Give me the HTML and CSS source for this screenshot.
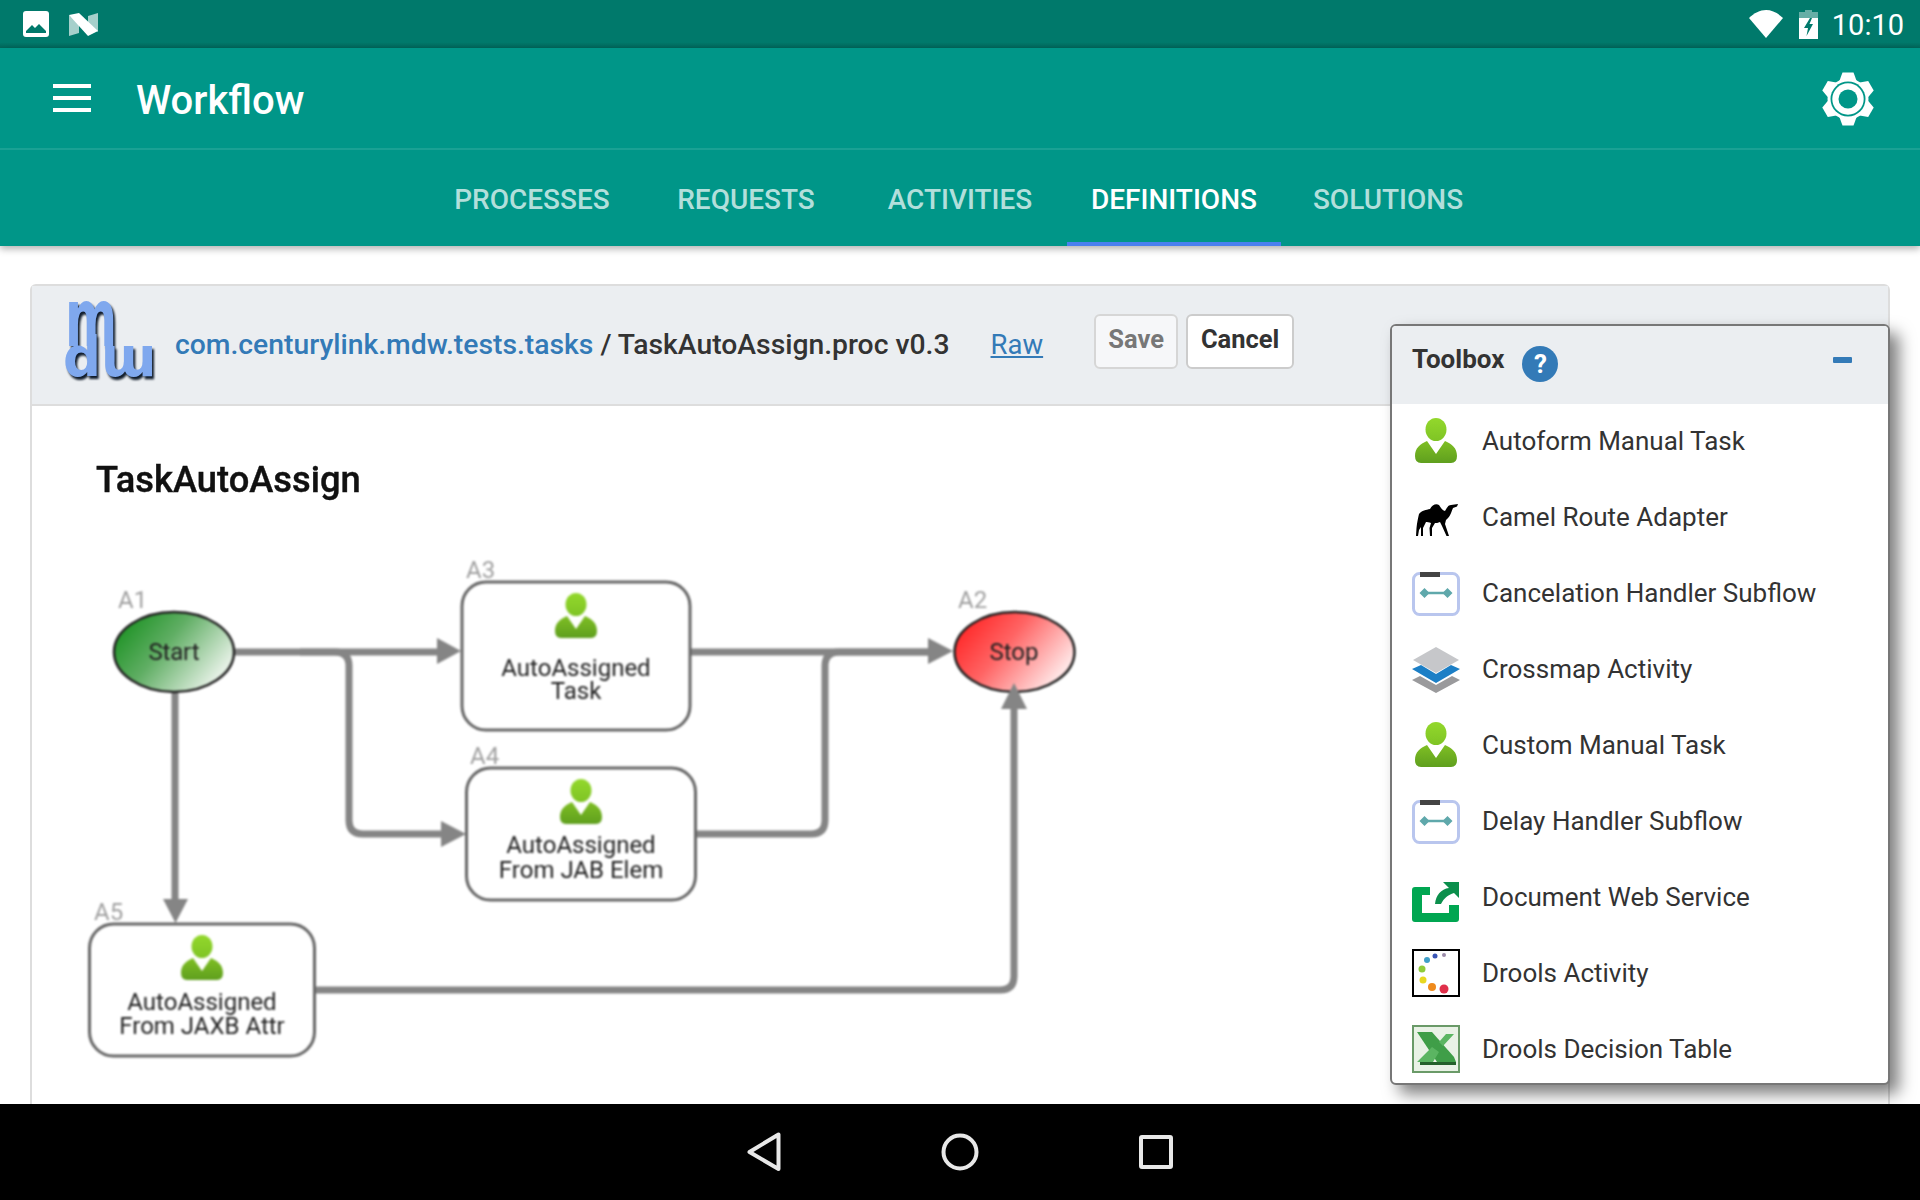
FILE: index.html
```html
<!DOCTYPE html>
<html lang="en">
<head>
<meta charset="UTF-8">
<meta name="viewport" content="width=device-width, initial-scale=1.0">
<title>Workflow</title>
<link rel="stylesheet" href="styles.css">
</head>
<body>
<svg class="defs" width="0" height="0">
    <defs>
        <linearGradient id="personHead" x1="0" y1="0" x2="0" y2="1">
            <stop offset="0" stop-color="#93d82c"/>
            <stop offset="1" stop-color="#7fc425"/>
        </linearGradient>
        <linearGradient id="personBody" x1="0" y1="0" x2="0" y2="1">
            <stop offset="0" stop-color="#7fbf24"/>
            <stop offset="1" stop-color="#5f9f1e"/>
        </linearGradient>
        <linearGradient id="startFill" x1="0" y1="0" x2="1" y2="0.55">
            <stop offset="0" stop-color="#0a8a12"/>
            <stop offset=".5" stop-color="#60ae64"/>
            <stop offset="1" stop-color="#e4f0e4"/>
        </linearGradient>
        <linearGradient id="stopFill" x1="0" y1="0" x2="1" y2="0.55">
            <stop offset="0" stop-color="#ff1414"/>
            <stop offset=".5" stop-color="#ff6464"/>
            <stop offset="1" stop-color="#ffe4e4"/>
        </linearGradient>
        <symbol id="person" viewBox="0 0 44 46">
            <ellipse cx="22" cy="11.5" rx="10.5" ry="11.5" fill="url(#personHead)"/>
            <path d="M1 38C1 30 6 26 13 23L22 36L31 23C38 26 43 30 43 38Q43 45 37 45H7Q1 45 1 38Z" fill="url(#personBody)"/>
        </symbol>
        <symbol id="subflow" viewBox="0 0 48 48">
            <rect x="1.5" y="4.5" width="45" height="41" rx="6" fill="#fff" stroke="#b9c6ee" stroke-width="3"/>
            <rect x="8" y="3" width="20" height="5" fill="#444"/>
            <path d="M11 24H37" stroke="#5fa8ab" stroke-width="2.500"/>
            <path d="M7.500 24L12.500 19L17.500 24L12.500 29ZM30.500 24L35.500 19L40.500 24L35.500 29Z" fill="#5fa8ab"/>
        </symbol>
    </defs>
</svg>

<div class="status-bar">
    <svg class="status-icon" width="26" height="26" viewBox="0 0 26 26">
        <rect width="26" height="26" rx="3" fill="#fff"/>
        <path d="M3 22V20L9 14L12 17L16 13L23 20V22Z" fill="#00796b"/>
    </svg>
    <svg class="status-icon n-icon" width="29" height="23" viewBox="0 0 29 23">
        <polygon points="0,2 10,10 10,20 0,23" fill="#fff" opacity=".65"/>
        <polygon points="19,3 29,0 29,19 19,10" fill="#fff" opacity=".65"/>
        <polygon points="0,2 10,0 29,18 19,23" fill="#fff"/>
    </svg>
    <span class="status-spacer"></span>
    <svg width="34" height="28" viewBox="0 0 34 28">
        <path d="M17 28L0 8C5 3 11 0 17 0S29 3 34 8Z" fill="#fff"/>
    </svg>
    <svg class="battery" width="19" height="29" viewBox="0 0 19 29">
        <path d="M6 0H13V2H19V8H0V2H6Z" fill="#fff" opacity=".4"/>
        <path d="M0 8H19V29H0Z" fill="#fff"/>
        <path d="M11 8L5 18H9L7.5 26L14 14H10.5L13 8Z" fill="#00796b"/>
    </svg>
    <span class="clock">10:10</span>
</div>

<header class="app-bar">
    <div class="title-row">
        <div class="hamburger"><span></span><span></span><span></span></div>
        <h1>Workflow</h1>
        <svg class="gear" width="54" height="54" viewBox="-27 -27 54 54">
            <g fill="#fff">
                <path d="M-5.500 -26.500H5.500L9 -17H-9Z"/>
                <path d="M-5.500 -26.500H5.500L9 -17H-9Z" transform="rotate(60)"/>
                <path d="M-5.500 -26.500H5.500L9 -17H-9Z" transform="rotate(120)"/>
                <path d="M-5.500 -26.500H5.500L9 -17H-9Z" transform="rotate(180)"/>
                <path d="M-5.500 -26.500H5.500L9 -17H-9Z" transform="rotate(240)"/>
                <path d="M-5.500 -26.500H5.500L9 -17H-9Z" transform="rotate(300)"/>
                <circle r="20.500"/>
            </g>
            <circle r="17.500" fill="#009688"/>
            <circle r="15.700" fill="#fff"/>
            <circle r="9.500" fill="#009688"/>
        </svg>
    </div>
    <nav class="tabs">
        <a>PROCESSES</a>
        <a>REQUESTS</a>
        <a>ACTIVITIES</a>
        <a class="active">DEFINITIONS</a>
        <a>SOLUTIONS</a>
    </nav>
</header>

<main class="content">
    <section class="panel">
        <div class="panel-heading">
            <svg class="logo" width="96" height="78" viewBox="0 0 96 78">
                <g class="logo-text">
                    <text transform="translate(2 45) scale(1.25 2)">m</text>
                    <text transform="translate(0 75) scale(1.33 1.4)">dɯ</text>
                </g>
            </svg>
            <div class="crumb"><a class="pkg">com.centurylink.mdw.tests.tasks</a> / TaskAutoAssign.proc v0.3</div>
            <a class="raw">Raw</a>
            <button class="btn btn-save">Save</button>
            <button class="btn btn-cancel">Cancel</button>
        </div>
        <div class="panel-body">
            <h2 class="diagram-title">TaskAutoAssign</h2>
            <svg class="diagram" width="1100" height="574" viewBox="33 530 1100 574">
                <g class="links">
                    <path d="M234 652H440"/>
                    <path d="M300 652H335Q349 652 349 666V820Q349 834 363 834H445"/>
                    <path d="M175 692V902"/>
                    <path d="M690 652H932"/>
                    <path d="M696 834H811Q825 834 825 820V666Q825 652 839 652H932"/>
                    <path d="M315 990H1000Q1014 990 1014 976V706"/>
                </g>
                <g class="heads">
                    <polygon points="437,638 461,651 437,664"/>
                    <polygon points="441,821 466,834 441,847"/>
                    <polygon points="163,899 188,899 175.500,923"/>
                    <polygon points="928,638 953,651 928,664"/>
                </g>
                <ellipse class="terminal" cx="174" cy="652" rx="60" ry="40" fill="url(#startFill)"/>
                <ellipse class="terminal" cx="1014.500" cy="652" rx="60" ry="40" fill="url(#stopFill)"/>
                <polygon class="heads" points="1001,709 1027,709 1014,683"/>
                <rect class="step" x="462" y="582" width="228" height="148" rx="24"/>
                <rect class="step" x="466.500" y="768" width="229" height="132" rx="24"/>
                <rect class="step" x="89.500" y="924" width="225" height="132" rx="24"/>
                <use href="#person" x="554" y="593" width="44" height="46"/>
                <use href="#person" x="559" y="779" width="44" height="46"/>
                <use href="#person" x="180" y="935" width="44" height="46"/>
                <g class="ids">
                    <text x="118" y="608">A1</text>
                    <text x="958" y="608">A2</text>
                    <text x="466" y="578">A3</text>
                    <text x="470" y="764">A4</text>
                    <text x="94" y="920">A5</text>
                </g>
                <g class="labels">
                    <text x="174" y="660" textLength="51">Start</text>
                    <text x="1014" y="660">Stop</text>
                    <text x="576" y="676">AutoAssigned</text>
                    <text x="576" y="699">Task</text>
                    <text x="581" y="853">AutoAssigned</text>
                    <text x="581" y="878">From JAB Elem</text>
                    <text x="202" y="1010">AutoAssigned</text>
                    <text x="202" y="1034">From JAXB Attr</text>
                </g>
            </svg>
        </div>
    </section>

    <aside class="toolbox">
        <div class="toolbox-head">
            <span class="toolbox-title">Toolbox</span>
            <span class="help">?</span>
            <span class="collapse"></span>
        </div>
        <ul class="toolbox-list">
            <li>
                <svg class="tool-icon" viewBox="0 0 48 48"><use href="#person" x="2" y="1" width="44" height="46"/></svg>
                Autoform Manual Task
            </li>
            <li>
                <svg class="tool-icon" viewBox="0 0 48 48">
                    <path d="M7 21C10 17 14 17 18 16C20 12 24 10 27 12C29 15 31 18 33 18C35 15 36 12 39 12L46 11L45 13.500L41 15C39 20 38 24 34 27L33 31L37 43H34.500L30 33L28 29C26 30 24 30 23 30L20 35V43H18L17.500 35L19 30C17 29 15 29 14 29L11 35V43H9V34L7 37L6 43H4L4.500 35C5 30 6 25 7 21Z" fill="#000"/>
                </svg>
                Camel Route Adapter
            </li>
            <li>
                <svg class="tool-icon"><use href="#subflow"/></svg>
                Cancelation Handler Subflow
            </li>
            <li>
                <svg class="tool-icon" viewBox="0 0 48 48">
                    <polygon points="24,2 47,15 24,28 1,15" fill="#c6c7ca"/>
                    <polygon points="0,35 8,31 24,40 40,31 48,35 24,48" fill="#9a9a9c"/>
                    <polygon points="0,24 9,20 24,29 39,20 48,24 24,38" fill="#1c7fc6"/>
                </svg>
                Crossmap Activity
            </li>
            <li>
                <svg class="tool-icon" viewBox="0 0 48 48"><use href="#person" x="2" y="1" width="44" height="46"/></svg>
                Custom Manual Task
            </li>
            <li>
                <svg class="tool-icon"><use href="#subflow"/></svg>
                Delay Handler Subflow
            </li>
            <li>
                <svg class="tool-icon overflow" viewBox="0 0 48 48">
                    <path d="M3 14H18V22H10V40H37V32H47V46Q47 49 44 49H3Q0 49 0 46V17Q0 14 3 14Z" fill="#00a651"/>
                    <path d="M47 9V25L42 20C36 22 32 25 29 31H23C24 22 29 16 37 15L31 9Z" fill="#0b8f4c"/>
                </svg>
                Document Web Service
            </li>
            <li>
                <svg class="tool-icon" viewBox="0 0 48 48">
                    <rect x="1" y="1" width="46" height="46" fill="#fff" stroke="#000" stroke-width="2"/>
                    <circle cx="32" cy="6" r="2" fill="#9a8aa8"/>
                    <circle cx="23" cy="7" r="2.500" fill="#3a55b5"/>
                    <circle cx="15" cy="11" r="3" fill="#3f9fc8"/>
                    <circle cx="10" cy="20" r="3.500" fill="#8fcc3a"/>
                    <circle cx="11" cy="31" r="3.500" fill="#e8d820"/>
                    <circle cx="20" cy="38" r="4" fill="#ef8a1c"/>
                    <circle cx="32" cy="40" r="4.500" fill="#e0304a"/>
                </svg>
                Drools Activity
            </li>
            <li>
                <svg class="tool-icon" viewBox="0 0 48 48">
                    <rect x="1" y="1" width="46" height="46" fill="#e9f2e6" stroke="#6a9a68" stroke-width="2"/>
                    <path d="M5 7H20L42 32L44 37H25Z" fill="#3f9e48"/>
                    <path d="M5 37L20 22L27 27L21 37ZM27 17L34 9H42L31 21Z" fill="#5bb562"/>
                    <path d="M8 37H44V40H8Z" fill="#24602b"/>
                </svg>
                Drools Decision Table
            </li>
        </ul>
    </aside>
</main>

<footer class="nav-bar">
    <svg width="36" height="42" viewBox="0 0 36 42">
        <path d="M32.500 3.500V38L3.500 21Z" fill="none" stroke="#e8e8e8" stroke-width="4" stroke-linejoin="round"/>
    </svg>
    <svg width="40" height="40" viewBox="0 0 40 40">
        <circle cx="20" cy="20" r="16.500" fill="none" stroke="#e8e8e8" stroke-width="4"/>
    </svg>
    <svg width="36" height="36" viewBox="0 0 36 36">
        <rect x="3" y="3" width="30" height="30" rx="1" fill="none" stroke="#e8e8e8" stroke-width="4"/>
    </svg>
</footer>
</body>
</html>
```

FILE: styles.css
```css
* {
    box-sizing: border-box;
}
body {
    margin: 0;
    width: 1920px;
    height: 1200px;
    display: flex;
    flex-direction: column;
    overflow: hidden;
    background-color: #fff;
    color: #333;
    font-family: Roboto, "Liberation Sans", sans-serif;
}
.defs {
    position: absolute;
}
.status-bar {
    height: 48px;
    flex: none;
    display: flex;
    align-items: center;
    padding: 0 16px 0 23px;
    background: linear-gradient(#00796b 88%, #00665a);
    color: #fff;
}
.n-icon {
    margin-left: 20px;
}
.status-spacer {
    flex: 1;
}
.battery {
    margin-left: 16px;
}
.clock {
    margin: 2px 0 0 14px;
    font-size: 29px;
}
.app-bar {
    height: 198px;
    flex: none;
    position: relative;
    z-index: 2;
    background-color: #009688;
    box-shadow: 0 3px 7px rgba(0, 0, 0, .3);
}
.title-row {
    height: 102px;
    display: flex;
    align-items: center;
    padding: 0 45px 0 53px;
    border-bottom: 2px solid #1aa194;
}
.hamburger {
    width: 38px;
    display: flex;
    flex-direction: column;
    gap: 8px;
}
.hamburger span {
    height: 4px;
    background-color: #fff;
}
.title-row h1 {
    flex: 1;
    margin: 4px 0 0 45px;
    font-size: 40px;
    font-weight: 500;
    color: #fff;
}
.gear {
    margin-top: 2px;
}
.tabs {
    display: flex;
    justify-content: center;
    height: 96px;
}
.tabs a {
    width: 214px;
    display: flex;
    align-items: center;
    justify-content: center;
    padding-top: 3px;
    font-size: 28px;
    font-weight: 500;
    color: #b2dfdb;
}
.tabs a.active {
    color: #fff;
    border-bottom: 4px solid #4a80f0;
    padding-top: 7px;
}
.content {
    flex: 1;
    position: relative;
    overflow: hidden;
    padding: 38px 30px 0;
}
.panel {
    height: 900px;
    border: 2px solid #ddd;
    border-radius: 6px 6px 0 0;
}
.panel-heading {
    height: 120px;
    display: flex;
    align-items: center;
    padding: 0 0 6px 31px;
    background-color: #ebeef1;
    border-bottom: 2px solid #ddd;
}
.logo {
    flex: none;
    margin: -4px 16px 0 0;
    overflow: visible;
    filter: blur(.6px);
}
.logo-text {
    filter: drop-shadow(2px 3px 1px #101c2c);
}
.logo-text text {
    font-family: "DejaVu Sans", sans-serif;
    font-size: 40px;
    font-weight: 700;
    fill: #7fa8ee;
}
.crumb {
    margin: 4px 41px 0 0;
    font-size: 28.300px;
    font-weight: 500;
}
.pkg {
    color: #337ab7;
}
.raw {
    margin: 4px 51px 0 0;
    font-size: 27.500px;
    color: #337ab7;
    text-decoration: underline;
}
.btn {
    height: 55px;
    margin: -2px 8px 0 0;
    padding: 0 0 4px;
    border: 2px solid #ccc;
    border-radius: 6px;
    font-family: inherit;
    font-size: 25.500px;
    font-weight: 700;
    background-color: #fff;
    color: #333;
}
.btn-save {
    width: 84px;
    background-color: #f6f7f9;
    border-color: #d6d6d6;
    color: #777;
}
.btn-cancel {
    width: 108px;
}
.panel-body {
    height: 778px;
}
.diagram-title {
    height: 124px;
    margin: 0;
    padding: 52px 0 0 64px;
    font-size: 36.300px;
    line-height: 44px;
    font-weight: 500;
    color: #111;
    -webkit-text-stroke: .4px #111;
    filter: blur(.5px);
}
.diagram {
    display: block;
    margin-left: 1px;
    filter: blur(.8px);
}
.links path {
    fill: none;
    stroke: #858585;
    stroke-width: 7;
}
.heads {
    fill: #858585;
}
.terminal {
    stroke: #222;
    stroke-width: 2.500;
}
.step {
    fill: #fff;
    stroke: #666;
    stroke-width: 3;
}
.ids text {
    font-size: 24px;
    fill: #a0a0a0;
}
.labels text {
    font-size: 24px;
    fill: #222;
    text-anchor: middle;
}
.toolbox {
    position: absolute;
    top: 78px;
    left: 1390px;
    width: 500px;
    height: 761px;
    background-color: #fff;
    border: 2px solid #777;
    border-radius: 6px;
    box-shadow: 9px 9px 16px rgba(0, 0, 0, .5);
    overflow: hidden;
}
.toolbox-head {
    height: 78px;
    display: flex;
    align-items: center;
    padding: 0 36px 0 20px;
    background-color: #ebeef1;
}
.toolbox-title {
    margin-top: -13px;
    font-size: 26px;
    font-weight: 700;
}
.help {
    width: 36px;
    height: 36px;
    margin: -2px 0 0 18px;
    border-radius: 50%;
    display: flex;
    align-items: center;
    justify-content: center;
    background-color: #337ab7;
    color: #fff;
    font-size: 26px;
    font-weight: 700;
}
.collapse {
    width: 19px;
    height: 6px;
    margin: -11px 0 0 auto;
    border-radius: 1px;
    background-color: #337ab7;
}
.toolbox-list {
    list-style: none;
    margin: -1px 0 0;
    padding: 0 0 0 20px;
}
.toolbox-list li {
    height: 76px;
    display: flex;
    align-items: center;
    gap: 22px;
    font-size: 26px;
}
.tool-icon {
    width: 48px;
    height: 48px;
    flex: none;
    filter: blur(.4px);
}
.tool-icon.overflow {
    overflow: visible;
}
.nav-bar {
    height: 96px;
    flex: none;
    display: flex;
    align-items: center;
    justify-content: center;
    gap: 158px;
    position: relative;
    z-index: 3;
    background-color: #000;
}
```
